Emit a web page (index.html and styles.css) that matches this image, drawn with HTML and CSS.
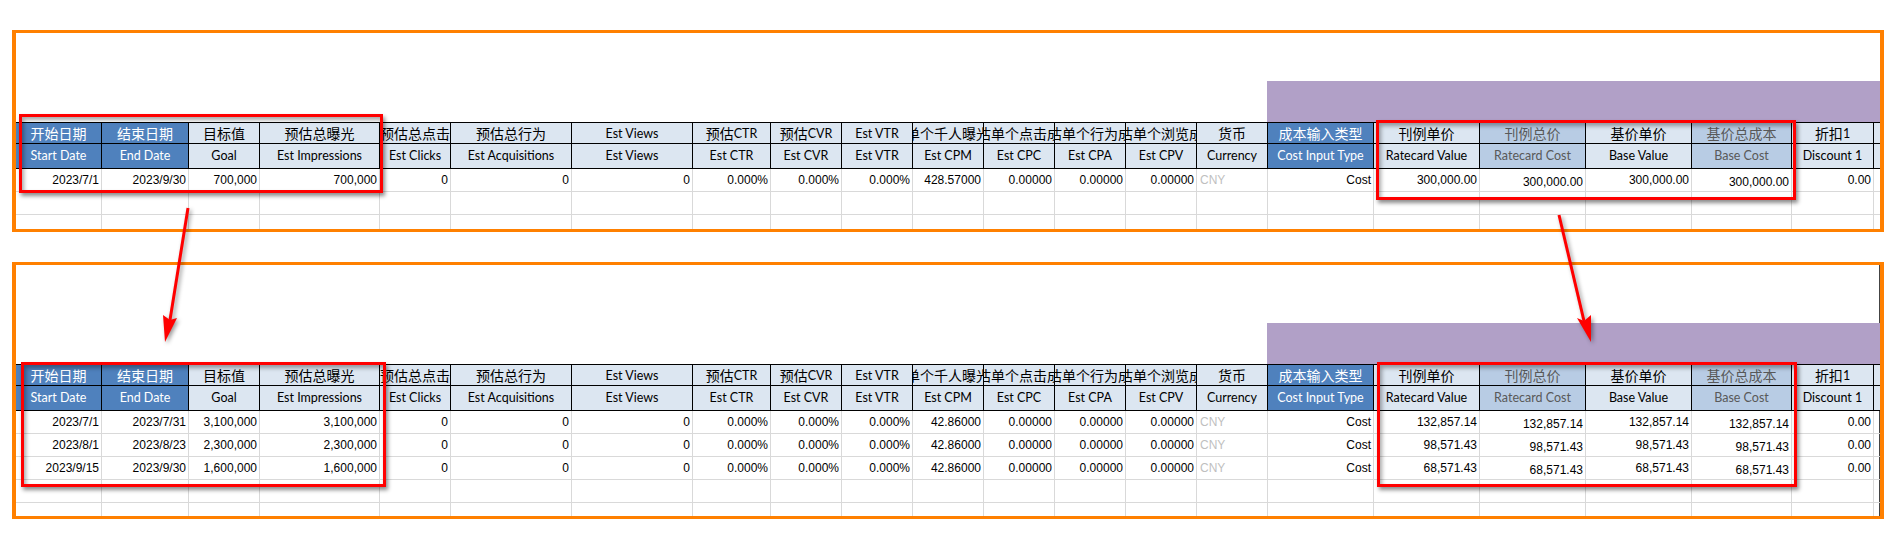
FILE: index.html
```html
<!DOCTYPE html>
<html lang="zh-CN">
<head>
<meta charset="utf-8">
<title>Plan comparison</title>
<link rel="stylesheet" href="styles.css">
</head>
<body>
<main class="page">
  <section class="frame frame-a">
    <div class="band"></div>
    <div class="sheet">
      <div class="row head-cn">
        <div class="c blue">开始日期</div><div class="c blue">结束日期</div><div class="c">目标值</div><div class="c">预估总曝光</div><div class="c">预估总点击</div><div class="c">预估总行为</div><div class="c"><span class="lat">Est Views</span></div><div class="c">预估<span class="lat">CTR</span></div><div class="c">预估<span class="lat">CVR</span></div><div class="c"><span class="lat">Est VTR</span></div><div class="c">预估单个千人曝光成本</div><div class="c">预估单个点击成本</div><div class="c">预估单个行为成本</div><div class="c">预估单个浏览成本</div><div class="c">货币</div><div class="c blue">成本输入类型</div><div class="c">刊例单价</div><div class="c mid">刊例总价</div><div class="c">基价单价</div><div class="c mid">基价总成本</div><div class="c">折扣<span class="lat">1</span></div><div class="c"></div>
      </div>
      <div class="row head-en">
        <div class="c blue">Start Date</div><div class="c blue">End Date</div><div class="c">Goal</div><div class="c">Est Impressions</div><div class="c">Est Clicks</div><div class="c">Est Acquisitions</div><div class="c">Est Views</div><div class="c">Est CTR</div><div class="c">Est CVR</div><div class="c">Est VTR</div><div class="c">Est CPM</div><div class="c">Est CPC</div><div class="c">Est CPA</div><div class="c">Est CPV</div><div class="c">Currency</div><div class="c blue">Cost Input Type</div><div class="c">Ratecard Value</div><div class="c mid">Ratecard Cost</div><div class="c">Base Value</div><div class="c mid">Base Cost</div><div class="c">Discount 1</div><div class="c"></div>
      </div>
      <div class="row data">
        <div class="c">2023/7/1</div><div class="c">2023/9/30</div><div class="c">700,000</div><div class="c">700,000</div><div class="c">0</div><div class="c">0</div><div class="c">0</div><div class="c">0.000%</div><div class="c">0.000%</div><div class="c">0.000%</div><div class="c">428.57000</div><div class="c">0.00000</div><div class="c">0.00000</div><div class="c">0.00000</div><div class="c cur">CNY</div><div class="c">Cost</div><div class="c">300,000.00</div><div class="c low">300,000.00</div><div class="c">300,000.00</div><div class="c low">300,000.00</div><div class="c">0.00</div><div class="c"></div>
      </div>
      <div class="row data">
        <div class="c"></div><div class="c"></div><div class="c"></div><div class="c"></div><div class="c"></div><div class="c"></div><div class="c"></div><div class="c"></div><div class="c"></div><div class="c"></div><div class="c"></div><div class="c"></div><div class="c"></div><div class="c"></div><div class="c"></div><div class="c"></div><div class="c"></div><div class="c"></div><div class="c"></div><div class="c"></div><div class="c"></div><div class="c"></div>
      </div>
      <div class="row data">
        <div class="c"></div><div class="c"></div><div class="c"></div><div class="c"></div><div class="c"></div><div class="c"></div><div class="c"></div><div class="c"></div><div class="c"></div><div class="c"></div><div class="c"></div><div class="c"></div><div class="c"></div><div class="c"></div><div class="c"></div><div class="c"></div><div class="c"></div><div class="c"></div><div class="c"></div><div class="c"></div><div class="c"></div><div class="c"></div>
      </div>
    </div>
    <div class="mark mark-a1"></div>
    <div class="mark mark-a2"></div>
  </section>

  <section class="frame frame-b">
    <div class="band"></div>
    <div class="sheet">
      <div class="row head-cn">
        <div class="c blue">开始日期</div><div class="c blue">结束日期</div><div class="c">目标值</div><div class="c">预估总曝光</div><div class="c">预估总点击</div><div class="c">预估总行为</div><div class="c"><span class="lat">Est Views</span></div><div class="c">预估<span class="lat">CTR</span></div><div class="c">预估<span class="lat">CVR</span></div><div class="c"><span class="lat">Est VTR</span></div><div class="c">预估单个千人曝光成本</div><div class="c">预估单个点击成本</div><div class="c">预估单个行为成本</div><div class="c">预估单个浏览成本</div><div class="c">货币</div><div class="c blue">成本输入类型</div><div class="c">刊例单价</div><div class="c mid">刊例总价</div><div class="c">基价单价</div><div class="c mid">基价总成本</div><div class="c">折扣<span class="lat">1</span></div><div class="c"></div>
      </div>
      <div class="row head-en">
        <div class="c blue">Start Date</div><div class="c blue">End Date</div><div class="c">Goal</div><div class="c">Est Impressions</div><div class="c">Est Clicks</div><div class="c">Est Acquisitions</div><div class="c">Est Views</div><div class="c">Est CTR</div><div class="c">Est CVR</div><div class="c">Est VTR</div><div class="c">Est CPM</div><div class="c">Est CPC</div><div class="c">Est CPA</div><div class="c">Est CPV</div><div class="c">Currency</div><div class="c blue">Cost Input Type</div><div class="c">Ratecard Value</div><div class="c mid">Ratecard Cost</div><div class="c">Base Value</div><div class="c mid">Base Cost</div><div class="c">Discount 1</div><div class="c"></div>
      </div>
      <div class="row data">
        <div class="c">2023/7/1</div><div class="c">2023/7/31</div><div class="c">3,100,000</div><div class="c">3,100,000</div><div class="c">0</div><div class="c">0</div><div class="c">0</div><div class="c">0.000%</div><div class="c">0.000%</div><div class="c">0.000%</div><div class="c">42.86000</div><div class="c">0.00000</div><div class="c">0.00000</div><div class="c">0.00000</div><div class="c cur">CNY</div><div class="c">Cost</div><div class="c">132,857.14</div><div class="c low">132,857.14</div><div class="c">132,857.14</div><div class="c low">132,857.14</div><div class="c">0.00</div><div class="c"></div>
      </div>
      <div class="row data">
        <div class="c">2023/8/1</div><div class="c">2023/8/23</div><div class="c">2,300,000</div><div class="c">2,300,000</div><div class="c">0</div><div class="c">0</div><div class="c">0</div><div class="c">0.000%</div><div class="c">0.000%</div><div class="c">0.000%</div><div class="c">42.86000</div><div class="c">0.00000</div><div class="c">0.00000</div><div class="c">0.00000</div><div class="c cur">CNY</div><div class="c">Cost</div><div class="c">98,571.43</div><div class="c low">98,571.43</div><div class="c">98,571.43</div><div class="c low">98,571.43</div><div class="c">0.00</div><div class="c"></div>
      </div>
      <div class="row data">
        <div class="c">2023/9/15</div><div class="c">2023/9/30</div><div class="c">1,600,000</div><div class="c">1,600,000</div><div class="c">0</div><div class="c">0</div><div class="c">0</div><div class="c">0.000%</div><div class="c">0.000%</div><div class="c">0.000%</div><div class="c">42.86000</div><div class="c">0.00000</div><div class="c">0.00000</div><div class="c">0.00000</div><div class="c cur">CNY</div><div class="c">Cost</div><div class="c">68,571.43</div><div class="c low">68,571.43</div><div class="c">68,571.43</div><div class="c low">68,571.43</div><div class="c">0.00</div><div class="c"></div>
      </div>
      <div class="row data">
        <div class="c"></div><div class="c"></div><div class="c"></div><div class="c"></div><div class="c"></div><div class="c"></div><div class="c"></div><div class="c"></div><div class="c"></div><div class="c"></div><div class="c"></div><div class="c"></div><div class="c"></div><div class="c"></div><div class="c"></div><div class="c"></div><div class="c"></div><div class="c"></div><div class="c"></div><div class="c"></div><div class="c"></div><div class="c"></div>
      </div>
      <div class="row data">
        <div class="c"></div><div class="c"></div><div class="c"></div><div class="c"></div><div class="c"></div><div class="c"></div><div class="c"></div><div class="c"></div><div class="c"></div><div class="c"></div><div class="c"></div><div class="c"></div><div class="c"></div><div class="c"></div><div class="c"></div><div class="c"></div><div class="c"></div><div class="c"></div><div class="c"></div><div class="c"></div><div class="c"></div><div class="c"></div>
      </div>
    </div>
    <div class="mark mark-b1"></div>
    <div class="mark mark-b2"></div>
  </section>

  <svg class="arrows" viewBox="0 0 1895 549" aria-hidden="true">
    <path class="arrow-line" d="M188 208L170 320"/>
    <path class="arrow-head" d="M165 342L163 315L170 320L177 318Z"/>
    <path class="arrow-line" d="M1559 215L1584 321"/>
    <path class="arrow-head" d="M1591 342L1577 318L1584 321L1591 315Z"/>
  </svg>
</main>
</body>
</html>
```

FILE: styles.css
```css
* { box-sizing: border-box; }
html, body { margin: 0; background: #fff; }
.page {
  position: relative;
  width: 1895px;
  height: 549px;
  padding: 30px 11px 0 12px;
  overflow: hidden;
  font-family: "Liberation Sans", "Noto Sans CJK SC", sans-serif;
  color: #000;
}
.frame {
  position: relative;
  border: solid #ff8000;
  border-width: 3px 4px;
  overflow: hidden;
}
.frame-a { height: 202px; padding-top: 48px; }
.frame-b { margin-top: 30px; height: 257px; padding-top: 58px; box-shadow: inset -1px 0 0 #444; }
.band { height: 41px; margin-left: 1251px; background: #b1a0c7; }
.sheet { border-top: 1px solid #000; width: 1864px; }
.row {
  display: grid;
  grid-template-columns: 86px 87px 71px 120px 71px 121px 121px 78px 71px 71px 71px 71px 71px 71px 71px 106px 106px 106px 106px 100px 82px 7px;
}
.c {
  display: flex;
  align-items: center;
  min-width: 0;
  overflow: hidden;
  white-space: nowrap;
  border-right: 1px solid #000;
  border-bottom: 1px solid #000;
}
.head-cn .c, .head-en .c { justify-content: center; background: #dce6f1; }
.head-cn { height: 21px; font: 14px/1 "Noto Sans CJK SC", sans-serif; }
.head-en { height: 25px; font: 12.5px/1 Lato, "Noto Sans", sans-serif; }
.head-cn .lat { padding-top: 2px; font: 12.5px/1 Lato, "Noto Sans", sans-serif; }
.head-cn .blue, .head-en .blue { background: #4f81bd; color: #fff; }
.head-cn .mid, .head-en .mid { background: #b8cce4; color: #595959; }
.data { height: 23px; font-size: 12px; }
.data .c {
  justify-content: flex-end;
  padding-right: 2px;
  border-color: #d9d9d9;
}
.data .low { padding-top: 4px; }
.data .cur { justify-content: flex-start; padding-left: 3px; color: #bfbfbf; }
.mark {
  position: absolute;
  border: 3px solid #f00;
  box-shadow: 2px 3px 4px rgba(0, 0, 0, .45), inset 2px 3px 4px rgba(0, 0, 0, .35);
}
.mark-a1 { left: 3px; top: 81px; width: 364px; height: 79px; }
.mark-a2 { left: 1360px; top: 87px; width: 420px; height: 80px; }
.mark-b1 { left: 5px; top: 97px; width: 365px; height: 125px; }
.mark-b2 { left: 1361px; top: 97px; width: 420px; height: 125px; }
.arrows { position: absolute; left: 0; top: 0; width: 1895px; height: 549px; pointer-events: none; filter: drop-shadow(2px 2px 2px rgba(0, 0, 0, .4)); }
.arrow-line { fill: none; stroke: #f00; stroke-width: 3px; }
.arrow-head { fill: #f00; }
```
